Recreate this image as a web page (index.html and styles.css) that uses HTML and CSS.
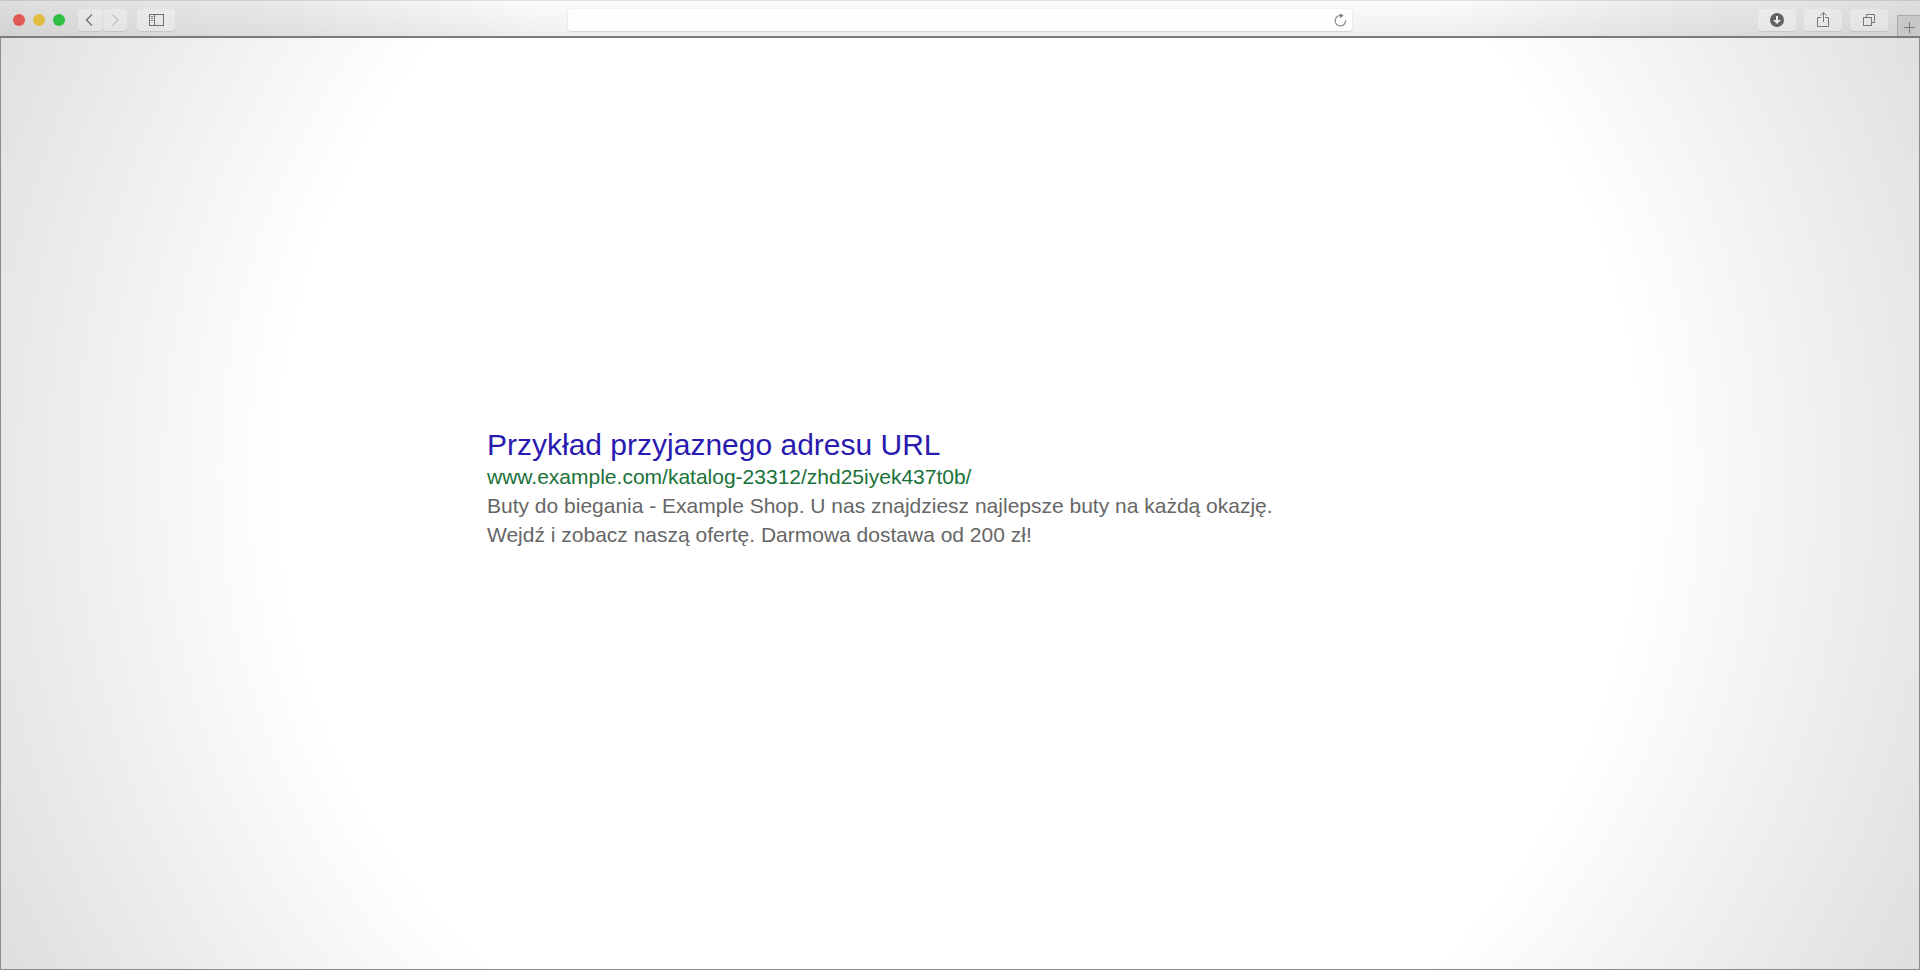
FILE: index.html
```
<!DOCTYPE html>
<html lang="pl">
<head>
    <meta charset="UTF-8">
    <meta name="viewport" content="width=device-width, initial-scale=1.0">
    <title>Przykład przyjaznego adresu URL</title>
    <link rel="stylesheet" href="styles.css">
</head>
<body>
    <header class="toolbar">
        <div class="toolbar-left">
            <div class="window-controls">
                <button class="dot close" aria-label="Zamknij"></button>
                <button class="dot minimize" aria-label="Minimalizuj"></button>
                <button class="dot maximize" aria-label="Maksymalizuj"></button>
            </div>
            <div class="history">
                <button class="tool-btn small" aria-label="Wstecz">
                    <svg width="24" height="22" viewBox="0 0 24 22"><path d="M14 5.500 L8.500 11 L14 16.500" fill="none" stroke="#777" stroke-width="1.500"/></svg>
                </button>
                <button class="tool-btn small" aria-label="Dalej">
                    <svg width="24" height="22" viewBox="0 0 24 22"><path d="M9.500 5.500 L15 11 L9.500 16.500" fill="none" stroke="#c6c6c6" stroke-width="1.500"/></svg>
                </button>
            </div>
            <button class="tool-btn" aria-label="Pasek boczny">
                <svg width="38" height="22" viewBox="0 0 38 22" fill="none" stroke="#707070">
                    <rect x="12.500" y="5.500" width="14" height="11"/>
                    <path d="M17.500 5.500 V16.500"/>
                    <path d="M14 7.500 H16 M14 9.500 H16 M14 11.500 H16"/>
                </svg>
            </button>
        </div>

        <form class="address">
            <input type="text" class="address-input" aria-label="Adres">
            <button type="button" class="reload" aria-label="Odśwież">
                <svg width="14" height="16" viewBox="0 0 14 16">
                    <path d="M8.500 3.700 A5.200 5.200 0 1 0 12.500 8.300" fill="none" stroke="#858585" stroke-width="1.100"/>
                    <path d="M7 1.300 L10.500 3.700 L7 6 Z" fill="#777"/>
                </svg>
            </button>
        </form>

        <div class="toolbar-right">
            <button class="tool-btn" aria-label="Pobrane">
                <svg width="38" height="22" viewBox="0 0 38 22">
                    <circle cx="19" cy="11" r="7" fill="#636363"/>
                    <path d="M19 7 V13" stroke="#eee" stroke-width="2"/>
                    <path d="M15 11 H23 L19 15 Z" fill="#eee"/>
                </svg>
            </button>
            <button class="tool-btn" aria-label="Udostępnij">
                <svg width="38" height="22" viewBox="0 0 38 22" fill="none" stroke="#777">
                    <path d="M17 8.500 H13.500 V17.500 H24.500 V8.500 H21"/>
                    <path d="M19.500 13 V4 M16.500 6.500 L19.500 3.500 L22.500 6.500"/>
                </svg>
            </button>
            <button class="tool-btn" aria-label="Karty">
                <svg width="38" height="22" viewBox="0 0 38 22" fill="none" stroke="#777">
                    <rect x="13.500" y="8.500" width="8" height="8"/>
                    <path d="M16.500 8 V5.500 H24.500 V13.500 H22"/>
                </svg>
            </button>
            <button class="new-tab" aria-label="Nowa karta">
                <svg width="22" height="20" viewBox="0 0 22 20"><path d="M6 11.500 H17 M11.500 6 V17" stroke="#777"/></svg>
            </button>
        </div>
    </header>

    <main class="page">
        <article class="result">
            <h1><a href="#">Przykład przyjaznego adresu URL</a></h1>
            <cite>www.example.com/katalog-23312/zhd25iyek437t0b/</cite>
            <p>Buty do biegania - Example Shop. U nas znajdziesz najlepsze buty na każdą okazję.<br>Wejdź i zobacz naszą ofertę. Darmowa dostawa od 200 zł!</p>
        </article>
    </main>
</body>
</html>
```
FILE: styles.css
```
* {
    margin: 0;
    padding: 0;
    box-sizing: border-box;
}

body {
    display: flex;
    flex-direction: column;
    min-height: 100vh;
    font-family: "Liberation Sans", Arial, sans-serif;
    background: radial-gradient(circle at 50% 49%, #fff 63%, #dedede 100%);
}

button {
    border: none;
    background: none;
    cursor: pointer;
}

svg {
    display: block;
}

/* Toolbar */
.toolbar {
    display: grid;
    grid-template-columns: 568fr 784fr 568fr;
    height: 38px;
    border-top: 1px solid rgba(0, 0, 0, 0.05);
    border-bottom: 2px solid #7b7b7b;
    background:
        linear-gradient(rgba(0, 0, 0, 0), rgba(0, 0, 0, 0.05)),
        linear-gradient(90deg, #dfdede, #ebeaea 15%, #fdfbfc 28%, #fdfbfc 75%, #ebeaea 88%, #dfdede);
}

.toolbar-left,
.toolbar-right {
    display: flex;
    padding-top: 8px;
}

.toolbar-left {
    gap: 10px;
    padding-left: 13px;
}

.window-controls {
    display: flex;
    align-items: center;
    gap: 8px;
    height: 22px;
    margin-right: 3px;
}

.dot {
    width: 12px;
    height: 12px;
    border-radius: 50%;
}

.close {
    background-color: #e05a54;
}

.minimize {
    background-color: #e2bc40;
}

.maximize {
    background-color: #2fbf45;
}

.history {
    display: flex;
    gap: 1px;
}

.tool-btn {
    width: 38px;
    height: 22px;
    border-radius: 3px;
    background-color: rgba(255, 255, 255, 0.3);
    box-shadow: 0 1px 1px rgba(0, 0, 0, 0.1);
}

.tool-btn.small {
    width: 24px;
}

.toolbar-right {
    justify-content: flex-end;
    gap: 8px;
}

.new-tab {
    align-self: flex-end;
    width: 23px;
    height: 21px;
    margin-left: 1px;
    border-top: 1px solid #a9a9a9;
    border-left: 1px solid #a9a9a9;
    background-color: #c8c8c8;
}

/* Address bar */
.address {
    display: flex;
    align-items: center;
    height: 22px;
    margin-top: 8px;
    padding-right: 5px;
    border-radius: 3px;
    background-color: #fffeff;
    box-shadow: 0 0 1px 1px rgba(0, 0, 0, 0.03), 0 1px 1px rgba(0, 0, 0, 0.1);
}

.address-input {
    flex: 1;
    height: 22px;
    padding: 0 8px;
    border: none;
    outline: none;
    background: none;
    font-size: 14px;
}

/* Page */
.page {
    flex: 1;
    display: flex;
    align-items: center;
    padding: 0 24px 30px calc(25% + 6px);
    border: 1px solid #8c8c8c;
    border-top: none;
}

.result h1 {
    font-size: 30px;
    font-weight: normal;
    line-height: 34px;
}

.result h1 a {
    color: #2a1bb0;
    text-decoration: none;
}

.result cite {
    display: block;
    color: #1a7138;
    font-size: 21px;
    font-style: normal;
    line-height: 29px;
}

.result p {
    color: #666;
    font-size: 21px;
    line-height: 29px;
}
```
